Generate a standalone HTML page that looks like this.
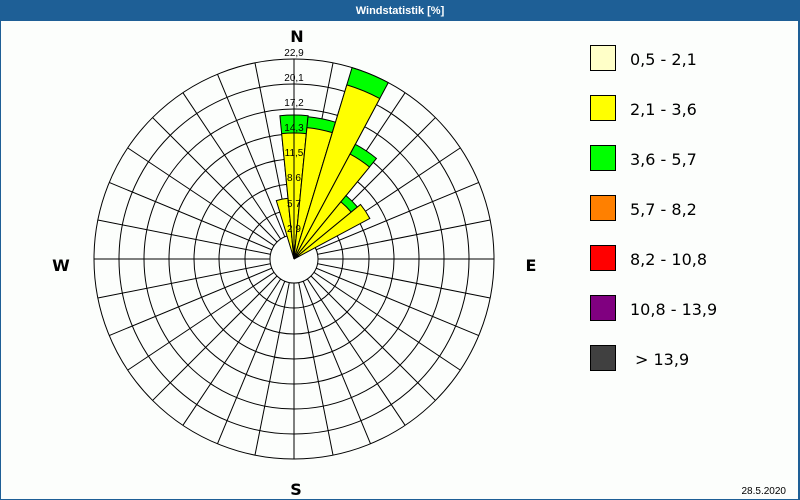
<!DOCTYPE html>
<html><head><meta charset="utf-8"><style>
html,body{margin:0;padding:0;width:800px;height:500px;overflow:hidden;background:#fcfefc;}
</style></head><body>
<svg width="800" height="500" xmlns="http://www.w3.org/2000/svg" style="display:block">
<rect x="0" y="0" width="800" height="500" fill="#fcfefc"/>
<rect x="0" y="0" width="800" height="21" fill="#1e5f96"/>
<rect x="0" y="0" width="1" height="500" fill="#1e5f96"/>
<rect x="798" y="0" width="2" height="500" fill="#1e5f96"/>
<rect x="0" y="499" width="800" height="1" fill="#1e5f96"/>
<text x="400" y="14" text-anchor="middle" font-family="Liberation Sans, sans-serif" font-size="11" font-weight="bold" fill="#ffffff">Windstatistik [%]</text>

<g transform="translate(294,259)" fill="none" stroke="#000" stroke-width="1">
  <circle r="200"/><circle r="175"/><circle r="150"/><circle r="125"/><circle r="100"/><circle r="75"/><circle r="49"/>
  <g id="sp">
  <line x1="0" y1="-200" x2="0" y2="200"/>
  <line x1="0" y1="-200" x2="0" y2="200" transform="rotate(11.25)"/>
  <line x1="0" y1="-200" x2="0" y2="200" transform="rotate(22.5)"/>
  <line x1="0" y1="-200" x2="0" y2="200" transform="rotate(33.75)"/>
  <line x1="0" y1="-200" x2="0" y2="200" transform="rotate(45)"/>
  <line x1="0" y1="-200" x2="0" y2="200" transform="rotate(56.25)"/>
  <line x1="0" y1="-200" x2="0" y2="200" transform="rotate(67.5)"/>
  <line x1="0" y1="-200" x2="0" y2="200" transform="rotate(78.75)"/>
  <line x1="0" y1="-200" x2="0" y2="200" transform="rotate(90)"/>
  <line x1="0" y1="-200" x2="0" y2="200" transform="rotate(101.25)"/>
  <line x1="0" y1="-200" x2="0" y2="200" transform="rotate(112.5)"/>
  <line x1="0" y1="-200" x2="0" y2="200" transform="rotate(123.75)"/>
  <line x1="0" y1="-200" x2="0" y2="200" transform="rotate(135)"/>
  <line x1="0" y1="-200" x2="0" y2="200" transform="rotate(146.25)"/>
  <line x1="0" y1="-200" x2="0" y2="200" transform="rotate(157.5)"/>
  <line x1="0" y1="-200" x2="0" y2="200" transform="rotate(168.75)"/>
  </g>
  <circle r="24" fill="#fcfefc"/>
  <path d="M0,0 L-5.98,-60.7 A61,61 0 0 1 5.98,-60.7 Z" fill="#ffff00" transform="rotate(-11.25)"/>
  <path d="M0,0 L-14.11,-143.3 A144,144 0 0 1 14.11,-143.3 Z" fill="#00ff00"/>
  <path d="M0,0 L-12.35,-125.4 A126,126 0 0 1 12.35,-125.4 Z" fill="#ffff00"/>
  <path d="M0,0 L-14.01,-142.3 A143,143 0 0 1 14.01,-142.3 Z" fill="#00ff00" transform="rotate(11.25)"/>
  <path d="M0,0 L-12.94,-131.4 A132,132 0 0 1 12.94,-131.4 Z" fill="#ffff00" transform="rotate(11.25)"/>
  <path d="M0,0 L-19.6,-199 A200,200 0 0 1 19.6,-199 Z" fill="#00ff00" transform="rotate(22.5)"/>
  <path d="M0,0 L-17.84,-181.1 A182,182 0 0 1 17.84,-181.1 Z" fill="#ffff00" transform="rotate(22.5)"/>
  <path d="M0,0 L-12.74,-129.4 A130,130 0 0 1 12.74,-129.4 Z" fill="#00ff00" transform="rotate(33.75)"/>
  <path d="M0,0 L-11.66,-118.4 A119,119 0 0 1 11.66,-118.4 Z" fill="#ffff00" transform="rotate(33.75)"/>
  <path d="M0,0 L-8.04,-81.6 A82,82 0 0 1 8.04,-81.6 Z" fill="#00ff00" transform="rotate(45)"/>
  <path d="M0,0 L-7.25,-73.6 A74,74 0 0 1 7.25,-73.6 Z" fill="#ffff00" transform="rotate(45)"/>
  <path d="M0,0 L-8.43,-85.6 A86,86 0 0 1 8.43,-85.6 Z" fill="#ffff00" transform="rotate(56.25)"/>
  <line x1="0" y1="0" x2="0" y2="-200"/>
</g>
<g font-family="Liberation Sans, sans-serif" font-size="10" fill="#000" text-anchor="middle">
  <text x="294" y="56">22,9</text>
  <text x="294" y="81">20,1</text>
  <text x="294" y="106">17,2</text>
  <text x="294" y="131">14,3</text>
  <text x="294" y="156">11,5</text>
  <text x="294" y="181">8,6</text>
  <text x="294" y="207">5,7</text>
  <text x="294" y="232">2,9</text>
</g>
<g font-family="DejaVu Sans, sans-serif" font-size="16" font-weight="bold" fill="#000" text-anchor="middle">
  <text x="297" y="42">N</text>
  <text x="531" y="271">E</text>
  <text x="61" y="271">W</text>
  <text x="296" y="495">S</text>
</g>
<text x="786" y="494" text-anchor="end" font-family="Liberation Sans, sans-serif" font-size="10" fill="#000">28.5.2020</text>

<g stroke="#000" stroke-width="1">
  <rect x="590.5" y="45.5" width="25" height="25" fill="#ffffc8"/>
  <rect x="590.5" y="95.5" width="25" height="25" fill="#ffff00"/>
  <rect x="590.5" y="145.5" width="25" height="25" fill="#00ff00"/>
  <rect x="590.5" y="195.5" width="25" height="25" fill="#ff8000"/>
  <rect x="590.5" y="245.5" width="25" height="25" fill="#ff0000"/>
  <rect x="590.5" y="295.5" width="25" height="25" fill="#800080"/>
  <rect x="590.5" y="345.5" width="25" height="25" fill="#404040"/>
</g>
<g font-family="DejaVu Sans, sans-serif" font-size="16" fill="#000">
  <text x="630" y="65">0,5 - 2,1</text>
  <text x="630" y="115">2,1 - 3,6</text>
  <text x="630" y="165">3,6 - 5,7</text>
  <text x="630" y="215">5,7 - 8,2</text>
  <text x="630" y="265">8,2 - 10,8</text>
  <text x="630" y="315">10,8 - 13,9</text>
  <text x="635" y="365">&gt; 13,9</text>
</g>
</svg>
</body></html>
